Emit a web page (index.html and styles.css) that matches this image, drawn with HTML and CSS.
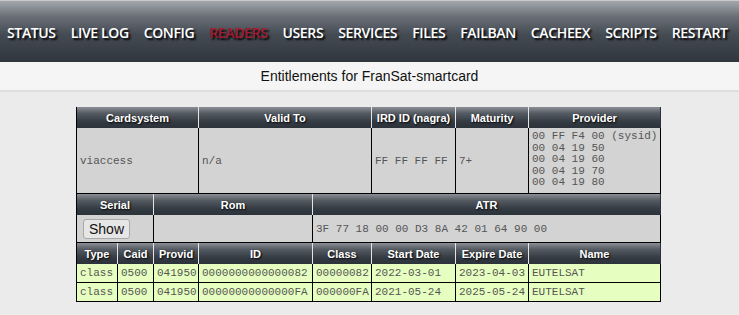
FILE: index.html
```html
<!DOCTYPE html>
<html lang="en">
<head>
    <meta charset="UTF-8">
    <title>OSCam - Entitlements</title>
    <link rel="stylesheet" href="styles.css">
</head>
<body>
    <div class="menu">
        <a href="#">STATUS</a>
        <a href="#">LIVE LOG</a>
        <a href="#">CONFIG</a>
        <a href="#" class="active">READERS</a>
        <a href="#">USERS</a>
        <a href="#">SERVICES</a>
        <a href="#">FILES</a>
        <a href="#">FAILBAN</a>
        <a href="#">CACHEEX</a>
        <a href="#">SCRIPTS</a>
        <a href="#">RESTART</a>
    </div>
    <div class="subhead">Entitlements for FranSat-smartcard</div>

    <table class="entitlements">
        <colgroup>
            <col style="width:41px"><col style="width:36px"><col style="width:45px"><col style="width:114px">
            <col style="width:59px"><col style="width:84px"><col style="width:73px"><col style="width:132px">
        </colgroup>
        <tr class="head">
            <th colspan="3">Cardsystem</th>
            <th colspan="2">Valid To</th>
            <th>IRD ID (nagra)</th>
            <th>Maturity</th>
            <th>Provider</th>
        </tr>
        <tr class="info big">
            <td colspan="3">viaccess</td>
            <td colspan="2">n/a</td>
            <td>FF FF FF FF</td>
            <td>7+</td>
            <td class="prov">00 FF F4 00 (sysid)<br>00 04 19 50<br>00 04 19 60<br>00 04 19 70<br>00 04 19 80</td>
        </tr>
        <tr class="head">
            <th colspan="2">Serial</th>
            <th colspan="2">Rom</th>
            <th colspan="4">ATR</th>
        </tr>
        <tr class="info">
            <td colspan="2" class="btncell"><button class="show">Show</button></td>
            <td colspan="2"></td>
            <td colspan="4">3F 77 18 00 00 D3 8A 42 01 64 90 00</td>
        </tr>
        <tr class="head">
            <th>Type</th>
            <th>Caid</th>
            <th>Provid</th>
            <th>ID</th>
            <th>Class</th>
            <th>Start Date</th>
            <th>Expire Date</th>
            <th>Name</th>
        </tr>
        <tr class="ent">
            <td>class</td><td>0500</td><td>041950</td><td>0000000000000082</td>
            <td>00000082</td><td>2022-03-01</td><td>2023-04-03</td><td>EUTELSAT</td>
        </tr>
        <tr class="ent">
            <td>class</td><td>0500</td><td>041950</td><td>00000000000000FA</td>
            <td>000000FA</td><td>2021-05-24</td><td>2025-05-24</td><td>EUTELSAT</td>
        </tr>
    </table>
</body>
</html>
```

FILE: styles.css
```css
body {
    margin: 0;
    background-color: #ebebeb;
    font-family: "Liberation Sans", Arial, sans-serif;
}

/* top navigation */
.menu {
    height: 61px;
    display: flex;
    align-items: center;
    gap: 15px;
    padding-left: 7px;
    border-top: 1px solid #c9cacc;
    background: linear-gradient(to bottom, #a3a7ad 0%, #6b7078 25%, #454b53 55%, #2f363e 100%);
}
.menu a {
    color: #fff;
    text-decoration: none;
    font-family: "Open Sans", sans-serif;
    font-size: 14px;
    font-weight: 600;
    letter-spacing: -0.36px;
    text-shadow: 2px 2px 2px #000;
    padding-top: 2px;
}
.menu a.active {
    color: #a3192e;
}

.subhead {
    height: 28px;
    line-height: 28px;
    text-align: center;
    font-size: 14px;
    color: #111;
    background-color: #f5f5f5;
    border-bottom: 2px solid #dedede;
}

/* entitlements table */
.entitlements {
    margin: 15px 0 0 76px;
    width: 584px;
    table-layout: fixed;
    border-collapse: separate;
    border-spacing: 0;
    border-left: 1px solid #000;
}
.head th {
    height: 21px;
    padding: 0;
    color: #fff;
    font-size: 11px;
    font-weight: bold;
    text-shadow: 1px 1px 2px #000;
    border-right: 1px solid #e4e4e4;
    background: linear-gradient(to bottom, #8c9096 0%, #555b62 30%, #353b43 70%, #2c323a 100%);
}
.head th:last-child {
    border-right: 1px solid #2c323a;
}
td {
    padding: 0 0 0 3px;
    font-family: "Liberation Mono", "Courier New", monospace;
    font-size: 11px;
    color: #555;
    white-space: nowrap;
    overflow: hidden;
    border-right: 1px solid #000;
    border-bottom: 1px solid #000;
}
.info td {
    background-color: #d3d3d3;
    height: 27px;
}
.big td {
    height: 65px;
}
.info td.prov {
    vertical-align: top;
    line-height: 11.5px;
    padding-top: 3px;
    height: 62px;
}
.btncell {
    padding-left: 6px;
}
.show {
    font-family: "Liberation Sans", Arial, sans-serif;
    font-size: 14px;
    color: #111;
    padding: 1px 5px;
    background-color: #e6e6e6;
    border: 1px solid #a9a9a9;
    border-radius: 3px;
}
.ent td {
    height: 18px;
    background-color: #e6ffc0;
}
```
